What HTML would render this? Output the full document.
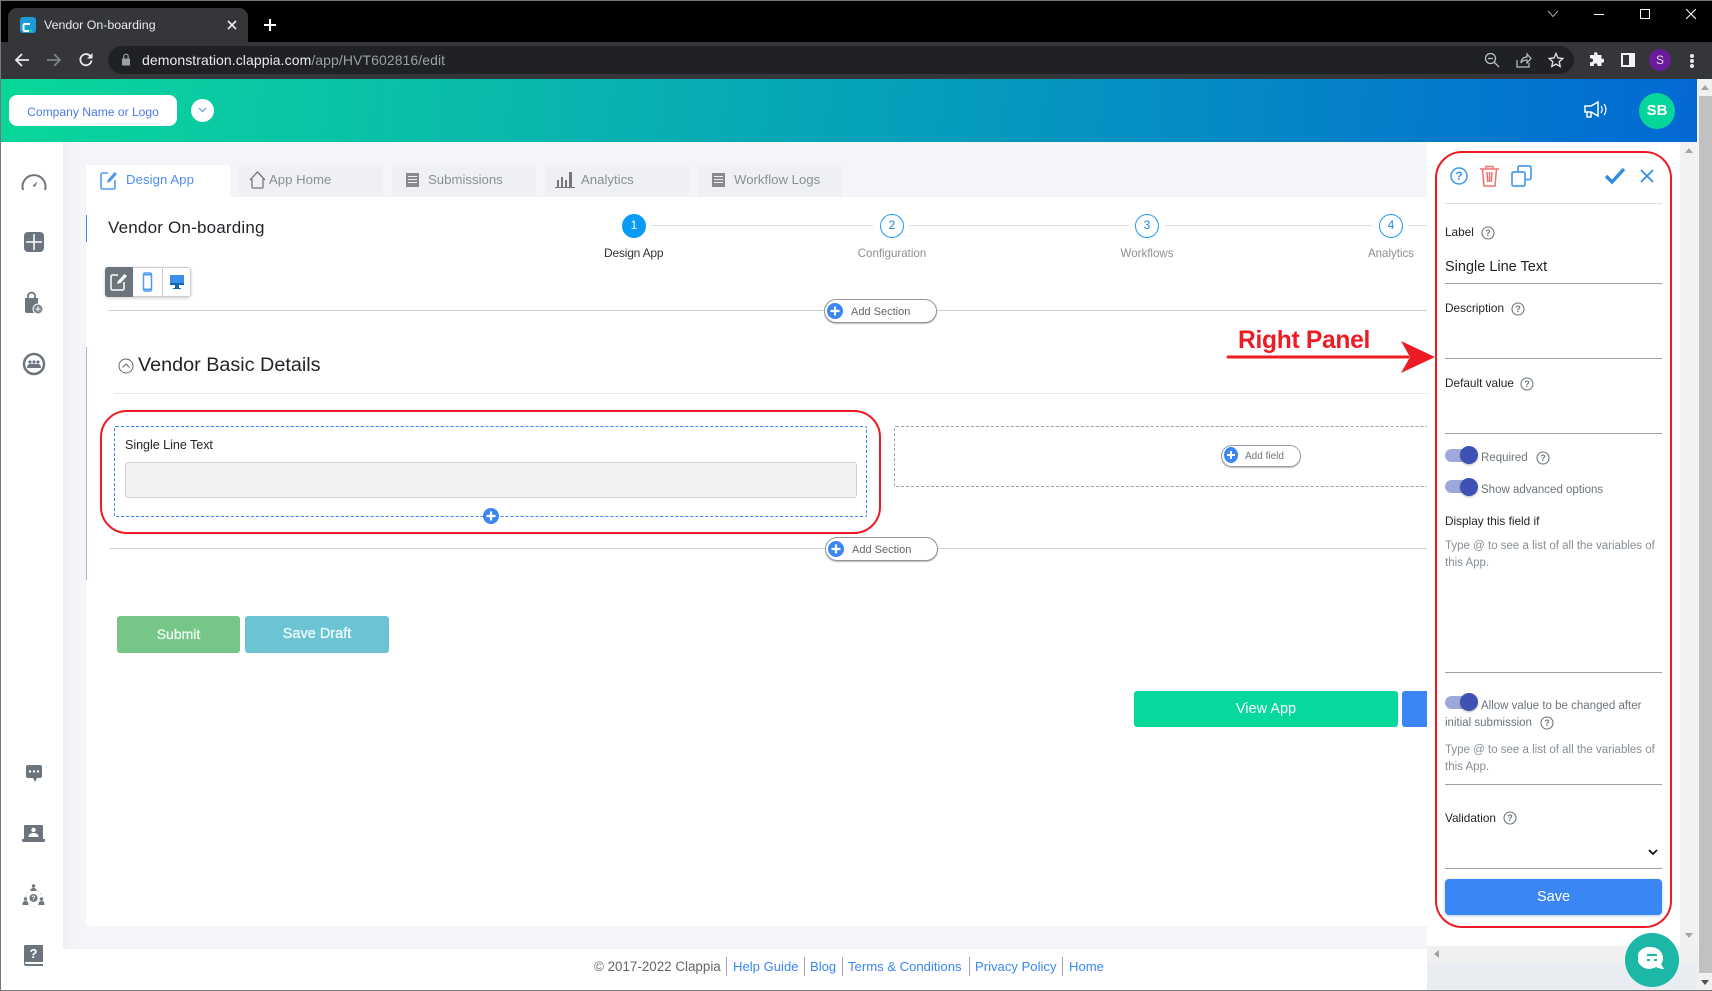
<!DOCTYPE html>
<html lang="en"><head><meta charset="utf-8"><title>Vendor On-boarding</title>
<style>
html,body{margin:0;padding:0;width:1712px;height:991px;overflow:hidden;background:#fff;font-family:"Liberation Sans",sans-serif}
div,span,svg{box-sizing:border-box}
.a,.t,svg{position:absolute}
.t{white-space:nowrap;line-height:20px;font-size:13px}
.l{height:1px;background:#9ea3a8;left:1445px;width:217px;position:absolute}
.lab{color:#212529;font-size:11.8px}
.gr{color:#6c757d;font-size:11.5px}
.ph{color:#868e96;font-size:11.5px}
.pill{position:absolute;background:#fff;border:1px solid #8f969c;border-radius:12px;box-shadow:0 1px 1px #bbb}
.tab{position:absolute;top:165px;height:32px;width:144px;background:#eff0f3}
.tabt{font-size:13.2px;color:#8a8f94;top:170px}
.step{position:absolute;width:24px;height:24px;border:1.5px solid #1e9bf5;border-radius:50%;top:214px;color:#1e87e5;font-size:12px;text-align:center;line-height:21px;background:#fff}
.sl{position:absolute;height:1px;top:225px;background:#dedede}
.sb{font-size:12px;color:#8f8f8f;top:243px;transform:scaleX(.96)}
.lnk{color:#3b86f5;font-size:13.1px;top:957px}
.sep{position:absolute;top:957px;width:1px;height:19px;background:#a59ec0}
.tgt{position:absolute;left:1445px;width:31px;height:13px;border-radius:7px;background:#9fa8da}
.tgk{position:absolute;left:1460px;width:18px;height:18px;border-radius:50%;background:#3f51b5;box-shadow:0 1px 2px rgba(0,0,0,.25)}
</style></head><body>

<!-- browser chrome -->
<div class="a" style="left:0;top:0;width:1712px;height:42px;background:#000"></div>
<div class="a" style="left:8px;top:8px;width:240px;height:34px;background:#35363a;border-radius:9px 9px 0 0"></div>
<div class="a" style="left:0;top:42px;width:1712px;height:37px;background:#35363a"></div>
<div class="a" style="left:20px;top:17px;width:16px;height:16px;border-radius:3px;background:#1e9bd7"></div>
<svg style="left:22px;top:22px" width="10" height="11" viewBox="0 0 10 11"><path d="M8 2H3a1.500 1.500 0 0 0-1.500 1.500v4A1.500 1.500 0 0 0 3 9h5" fill="none" stroke="#fff" stroke-width="2"/><path d="M7 7h3v3H7z" fill="#0ad39b"/></svg>
<div class="t" style="left:44px;top:15px;color:#e8eaed;font-size:12.4px;">Vendor On-boarding</div>
<svg style="left:226px;top:19px" width="12" height="12" viewBox="0 0 12 12"><path d="M2 2l8 8M10 2l-8 8" stroke="#e8eaed" stroke-width="1.6"/></svg>
<svg style="left:263px;top:18px" width="14" height="14" viewBox="0 0 14 14"><path d="M7 1v12M1 7h12" stroke="#fff" stroke-width="2"/></svg>
<svg style="left:14px;top:52px" width="16" height="16" viewBox="0 0 16 16"><path d="M15 8H2M8 2L2 8l6 6" fill="none" stroke="#e8eaed" stroke-width="1.8"/></svg>
<svg style="left:46px;top:52px" width="16" height="16" viewBox="0 0 16 16"><path d="M1 8h13M8 2l6 6-6 6" fill="none" stroke="#7f8286" stroke-width="1.8"/></svg>
<svg style="left:78px;top:52px" width="16" height="16" viewBox="0 0 16 16"><path d="M13.5 8.5A5.6 5.6 0 1 1 12 3.8" fill="none" stroke="#e8eaed" stroke-width="1.8"/><path d="M14.5 1v5.5H9z" fill="#e8eaed"/></svg>
<div class="a" style="left:108px;top:46px;width:1466px;height:28px;background:#202124;border-radius:14px"></div>
<svg style="left:121px;top:53px" width="10" height="13" viewBox="0 0 10 13"><path d="M1 5.5h8v7H1z" fill="#9aa0a6"/><path d="M2.8 5.5V3.4a2.2 2.2 0 0 1 4.4 0v2.1" fill="none" stroke="#9aa0a6" stroke-width="1.2"/></svg>
<div class="t" style="left:142px;top:50px;font-size:14px;color:#e8eaed;letter-spacing:.08px">demonstration.clappia.com<span style="color:#9aa0a6">/app/HVT602816/edit</span></div>
<svg style="left:1484px;top:52px" width="16" height="16" viewBox="0 0 16 16"><circle cx="6.5" cy="6.5" r="5" fill="none" stroke="#bdc1c6" stroke-width="1.3"/><path d="M10.3 10.3L15 15M4 6.5h5" stroke="#bdc1c6" stroke-width="1.3"/></svg>
<svg style="left:1516px;top:52px" width="16" height="16" viewBox="0 0 16 16"><path d="M1 8v7h12v-4M5 11c0-4 3-6 6-6V2l4 4.500-4 4.500V8c-3 0-5 1-6 3z" fill="none" stroke="#bdc1c6" stroke-width="1.2"/></svg>
<svg style="left:1548px;top:52px" width="16" height="16" viewBox="0 0 16 16"><path d="M8 1.500l2 4.500 4.800.5-3.600 3.200 1 4.800L8 12.100 3.800 14.500l1-4.800L1.200 6.500 6 6z" fill="none" stroke="#dadce0" stroke-width="1.400"/></svg>
<svg style="left:1588px;top:52px" width="16" height="16" viewBox="0 0 16 16"><path d="M6 1.500a1.800 1.800 0 0 1 3.500 0V3h4v3.800h1.200a1.900 1.900 0 0 1 0 3.800H13.500V14h-4v-1.200a1.900 1.900 0 0 0-3.700 0V14H2v-3.800h1.200a1.900 1.900 0 0 0 0-3.800H2V3h4z" fill="#f1f3f4"/></svg>
<div class="a" style="left:1621px;top:53px;width:14px;height:14px;background:#f1f3f4"></div>
<div class="a" style="left:1623px;top:55px;width:6px;height:10px;background:#35363a"></div>
<div class="a" style="left:1649px;top:49px;width:22px;height:22px;border-radius:50%;background:#6a1b9a;color:#e8d5ef;font-size:12px;text-align:center;line-height:22px">S</div>
<div class="a" style="left:1690px;top:54px;width:4px;height:4px;border-radius:50%;background:#e8eaed"></div>
<div class="a" style="left:1690px;top:59px;width:4px;height:4px;border-radius:50%;background:#e8eaed"></div>
<div class="a" style="left:1690px;top:64px;width:4px;height:4px;border-radius:50%;background:#e8eaed"></div>
<svg style="left:1547px;top:10px" width="12" height="8" viewBox="0 0 12 8"><path d="M1 1l5 5.500L11 1" fill="none" stroke="#aaa" stroke-width="1"/></svg>
<div class="a" style="left:1594px;top:14px;width:10px;height:1px;background:#fff"></div>
<div class="a" style="left:1640px;top:9px;width:10px;height:10px;border:1px solid #fff"></div>
<svg style="left:1686px;top:9px" width="10" height="10" viewBox="0 0 10 10"><path d="M0 0l10 10M10 0L0 10" stroke="#fff" stroke-width="1"/></svg>

<!-- header -->
<div class="a" style="left:0;top:79px;width:1697px;height:63px;background:linear-gradient(97deg,#09d79a 0%,#09b9ac 30%,#0598bf 60%,#0369d4 100%)"></div>
<div class="a" style="left:9px;top:95px;width:168px;height:31px;background:#fff;border-radius:8px;color:#4a78ee;font-size:12.1px;line-height:34px;text-align:center">Company Name or Logo</div>
<div class="a" style="left:191px;top:99px;width:23px;height:23px;background:#fff;border-radius:50%"></div>
<svg style="left:198px;top:107px" width="9" height="6" viewBox="0 0 9 6"><path d="M1 1l3.500 3.500L8 1" fill="none" stroke="#5b8fe8" stroke-width="1"/></svg>
<svg style="left:1584px;top:101px" width="24" height="18" viewBox="0 0 24 18"><path d="M1 5h6l7-4v14l-7-4H1zM3 11v5h4v-5" fill="none" stroke="#fff" stroke-width="1.500"/><path d="M17 5c1.500 2 1.500 5 0 7M20 3c2.500 3 2.500 8 0 11" fill="none" stroke="#fff" stroke-width="1.200"/></svg>
<div class="a" style="left:1639px;top:93px;width:36px;height:36px;border-radius:50%;background:#07d69b;color:#fff;font-weight:bold;font-size:15px;line-height:36px;text-align:center">SB</div>

<!-- page background -->
<div class="a" style="left:63px;top:142px;width:1364px;height:807px;background:linear-gradient(90deg,#eceef2,#f4f5f9 10px)"></div>
<div class="a" style="left:86px;top:197px;width:1341px;height:729px;background:#fff"></div>
<div class="a" style="left:63px;top:949px;width:1364px;height:41px;background:#fff"></div>

<!-- sidebar icons -->
<svg style="left:20px;top:171px" width="28" height="22" viewBox="0 0 28 22"><path d="M3 19a11.500 11.500 0 1 1 22 0" fill="none" stroke="#6c757d" stroke-width="2"/><path d="M12.500 15l5-5-2.500 6z" fill="#6c757d"/></svg>
<svg style="left:23px;top:231px" width="22" height="22" viewBox="0 0 22 22"><rect x="1" y="1" width="20" height="20" rx="4" fill="#6c757d"/><path d="M11 3v16M3 11h16" stroke="#fff" stroke-width="1.500"/></svg>
<svg style="left:23px;top:291px" width="22" height="24" viewBox="0 0 22 24"><path d="M2 7h13v15H4a2 2 0 0 1-2-2z" fill="#6c757d"/><path d="M5 7V5a3.500 3.500 0 0 1 7 0v2" fill="none" stroke="#6c757d" stroke-width="1.800"/><circle cx="15" cy="18" r="5" fill="#7f878e" stroke="#fff"/><path d="M15 15.500v5M12.500 18h5" stroke="#fff"/></svg>
<svg style="left:22px;top:352px" width="24" height="24" viewBox="0 0 24 24"><circle cx="12" cy="12" r="10" fill="#fff" stroke="#6c757d" stroke-width="2.500"/><g fill="#6c757d"><circle cx="8" cy="10" r="1.600"/><circle cx="12" cy="10" r="1.600"/><circle cx="16" cy="10" r="1.600"/><path d="M5 16c0-3 1.500-4 3-4h8c1.500 0 3 1 3 4z"/></g></svg>
<svg style="left:25px;top:764px" width="18" height="19" viewBox="0 0 18 19"><path d="M3 1h12a2 2 0 0 1 2 2v9a2 2 0 0 1-2 2h-3l-2 4-2-4H3a2 2 0 0 1-2-2V3a2 2 0 0 1 2-2z" fill="#6c757d"/><circle cx="5" cy="7.500" r="1.200" fill="#fff"/><circle cx="9" cy="7.500" r="1.200" fill="#fff"/><circle cx="13" cy="7.500" r="1.200" fill="#fff"/></svg>
<svg style="left:22px;top:824px" width="23" height="19" viewBox="0 0 23 19"><path d="M3 1h17a1 1 0 0 1 1 1v13H2V2a1 1 0 0 1 1-1z" fill="#6c757d"/><path d="M0 15h23v1.500a1.500 1.500 0 0 1-1.500 1.500h-20A1.500 1.500 0 0 1 0 16.500z" fill="#6c757d"/><circle cx="11.500" cy="6" r="2.200" fill="#fff"/><path d="M6.500 13c0-3 2-4 5-4s5 1 5 4z" fill="#fff"/></svg>
<svg style="left:22px;top:884px" width="23" height="23" viewBox="0 0 23 23"><g fill="#6c757d"><circle cx="11.500" cy="2" r="1.700"/><path d="M8.500 7c0-2 1-3 3-3s3 1 3 3z"/><circle cx="3.500" cy="15" r="1.700"/><path d="M.5 21c0-3 1-4 3-4s3 1 3 4z"/><circle cx="19.500" cy="15" r="1.700"/><path d="M16.500 21c0-3 1-4 3-4s3 1 3 4z"/><circle cx="11.500" cy="14" r="4"/></g><text x="11.500" y="16.500" font-size="7" font-weight="bold" fill="#fff" text-anchor="middle" font-family="Liberation Sans">?</text><circle cx="11.500" cy="14" r="8.500" fill="none" stroke="#8f969c" stroke-width=".7" stroke-dasharray="1 3"/></svg>
<svg style="left:23px;top:944px" width="21" height="23" viewBox="0 0 21 23"><path d="M2 1h18v17H3a1 1 0 0 0 0 2h17v2H3a2 2 0 0 1-2-2V2a1 1 0 0 1 1-1z" fill="#6c757d"/><text x="10.500" y="14" font-size="13" font-weight="bold" fill="#fff" text-anchor="middle" font-family="Liberation Sans">?</text></svg>

<!-- tabs -->
<div class="tab" style="left:86px;background:#fff"></div>
<div class="tab" style="left:239px"></div>
<div class="tab" style="left:392px"></div>
<div class="tab" style="left:545px"></div>
<div class="tab" style="left:698px"></div>
<svg style="left:100px;top:170px" width="18" height="20" viewBox="0 0 18 20"><path d="M8 3H2.500A1.500 1.500 0 0 0 1 4.500v13A1.500 1.500 0 0 0 2.500 19h11a1.500 1.500 0 0 0 1.500-1.500V10" fill="none" stroke="#4e9bf0" stroke-width="1.600"/><path d="M7 13l1-3.500L14.500 2 17 4l-6.500 7.500z" fill="#4e9bf0"/></svg>
<div class="t tabt" style="left:126px;color:#4e8df0;letter-spacing:.05px">Design App</div>
<svg style="left:249px;top:171px" width="17" height="18" viewBox="0 0 17 18"><path d="M1 9l7.500-8L16 9M3 8v8a1 1 0 0 0 1 1h9a1 1 0 0 0 1-1V8" fill="none" stroke="#777" stroke-width="1.300"/></svg>
<div class="t tabt" style="left:269px">App Home</div>
<svg style="left:406px;top:173px" width="13" height="14" viewBox="0 0 13 14"><rect width="13" height="14" fill="#8a8a8a"/><path d="M2 3.500h9M2 6.500h9M2 9.500h9" stroke="#eff0f3" stroke-width="1"/></svg>
<div class="t tabt" style="left:428px">Submissions</div>
<svg style="left:555px;top:171px" width="20" height="17" viewBox="0 0 20 17"><path d="M2 9h2v7H2zM6 6h2v10H6zM10 9h2v7h-2zM14 1h3v15h-3zM0 16h20v1H0z" fill="#777"/></svg>
<div class="t tabt" style="left:581px">Analytics</div>
<svg style="left:712px;top:173px" width="13" height="14" viewBox="0 0 13 14"><rect width="13" height="14" fill="#8a8a8a"/><path d="M2 3.500h9M2 6.500h9M2 9.500h9" stroke="#eff0f3" stroke-width="1"/></svg>
<div class="t tabt" style="left:734px">Workflow Logs</div>

<div class="a" style="left:86px;top:215px;width:1px;height:27px;background:#3b86f5"></div>
<div class="a" style="left:86px;top:347px;width:1px;height:233px;background:#a9b7c6"></div>
<div class="a" style="left:1427px;top:161px;width:2px;height:27px;background:#3b86f5"></div>
<div class="t" style="left:108px;top:218px;font-size:17px;color:#212529;letter-spacing:.2px">Vendor On-boarding</div>

<!-- stepper -->
<div class="sl" style="left:651px;width:222px"></div>
<div class="sl" style="left:909px;width:220px"></div>
<div class="sl" style="left:1165px;width:207px"></div>
<div class="sl" style="left:1408px;width:19px"></div>
<div class="step" style="left:622px;background:#0a9bf7;border-color:#0a9bf7;color:#fff">1</div>
<div class="step" style="left:880px">2</div>
<div class="step" style="left:1135px">3</div>
<div class="step" style="left:1379px">4</div>
<div class="t sb" style="left:604px;color:#333;width:59px;text-align:center;transform:none;letter-spacing:-.2px">Design App</div>
<div class="t sb" style="left:852px;width:80px;text-align:center">Configuration</div>
<div class="t sb" style="left:1107px;width:80px;text-align:center">Workflows</div>
<div class="t sb" style="left:1351px;width:80px;text-align:center">Analytics</div>

<!-- view toggle -->
<div class="a" style="left:105px;top:267px;width:86px;height:30px;background:#fff;border:1px solid #ccc;border-radius:3px;box-shadow:0 1px 3px rgba(0,0,0,.2)"></div>
<div class="a" style="left:105px;top:267px;width:28px;height:30px;background:#6c757d;border-radius:3px 0 0 3px"></div>
<div class="a" style="left:162px;top:268px;width:1px;height:28px;background:#ccc"></div>
<svg style="left:110px;top:272px" width="18" height="20" viewBox="0 0 18 20"><path d="M8 3H2.500A1.500 1.500 0 0 0 1 4.500v12A1.500 1.500 0 0 0 2.500 18h10a1.500 1.500 0 0 0 1.500-1.500V10" fill="none" stroke="#fff" stroke-width="1.500"/><path d="M7 12l1-3L14.500 2 17 4l-6.500 7z" fill="#fff"/></svg>
<svg style="left:142px;top:272px" width="11" height="20" viewBox="0 0 11 20"><rect x="1.500" y="1" width="8" height="18" rx="1.500" fill="none" stroke="#4e9bf0" stroke-width="1.500"/><path d="M2 2h7v1.500H2zM2 16.500h7V18H2z" fill="#4e9bf0"/></svg>
<svg style="left:170px;top:275px" width="14" height="15" viewBox="0 0 14 15"><rect width="14" height="10" fill="#3b8eea"/><path d="M0 8h14v2H0zM5 10h4v3h2v1H3v-1h2z" fill="#1667b0"/></svg>

<!-- canvas -->
<div class="a" style="left:108px;top:310px;width:1319px;height:1px;background:#cfcfcf"></div>
<div class="pill" style="left:824px;top:299px;width:113px;height:24px"></div>
<div class="a" style="left:827px;top:303px;width:16px;height:16px;border-radius:50%;background:#3b86f5"></div>
<svg style="left:827px;top:303px" width="16" height="16" viewBox="0 0 16 16"><path d="M8 3.500v9M3.500 8h9" stroke="#fff" stroke-width="2.200"/></svg>
<div class="t" style="left:851px;top:302px;font-size:11px;color:#5f666c">Add Section</div>

<svg style="left:118px;top:358px" width="16" height="16" viewBox="0 0 16 16"><circle cx="8" cy="8" r="7" fill="none" stroke="#666" stroke-width="1"/><path d="M4.500 9.500L8 6l3.500 3.500" fill="none" stroke="#666"/></svg>
<div class="t" style="left:138px;top:355px;font-size:19.8px;color:#212529">Vendor Basic Details</div>
<div class="a" style="left:114px;top:393px;width:1313px;height:1px;background:#e6e6e6"></div>

<div class="a" style="left:114px;top:426px;width:753px;height:91px;border:1px dashed #3b86f5;border-radius:2px"></div>
<div class="t" style="left:125px;top:435px;font-size:12.6px;color:#212529;letter-spacing:-.05px">Single Line Text</div>
<div class="a" style="left:125px;top:462px;width:732px;height:36px;background:#f2f2f2;border:1px solid #ccd0d4;border-radius:3px"></div>
<div class="a" style="left:483px;top:508px;width:16px;height:16px;border-radius:50%;background:#3b86f5"></div>
<svg style="left:483px;top:508px" width="16" height="16" viewBox="0 0 16 16"><path d="M8 3.500v9M3.500 8h9" stroke="#fff" stroke-width="2.200"/></svg>

<div class="a" style="left:894px;top:426px;width:541px;height:61px;border:1px dashed #a0a4a8;border-radius:2px"></div>
<div class="pill" style="left:1221px;top:445px;width:80px;height:22px;border-radius:11px;border-color:#9aa0a6"></div>
<div class="a" style="left:1224px;top:447px;width:14px;height:16px;border-radius:50%;background:#3b86f5"></div>
<svg style="left:1224px;top:447px" width="14" height="16" viewBox="0 0 14 16"><path d="M7 4v8M3 8h8" stroke="#fff" stroke-width="2"/></svg>
<div class="t" style="left:1245px;top:447px;font-size:10px;color:#6c757d">Add field</div>

<div class="a" style="left:110px;top:548px;width:1317px;height:1px;background:#cfcfcf"></div>
<div class="pill" style="left:825px;top:537px;width:113px;height:24px"></div>
<div class="a" style="left:828px;top:541px;width:16px;height:16px;border-radius:50%;background:#3b86f5"></div>
<svg style="left:828px;top:541px" width="16" height="16" viewBox="0 0 16 16"><path d="M8 3.500v9M3.500 8h9" stroke="#fff" stroke-width="2.200"/></svg>
<div class="t" style="left:852px;top:540px;font-size:11px;color:#5f666c">Add Section</div>

<div class="a" style="left:117px;top:616px;width:123px;height:37px;background:#76c687;border-radius:3px;color:#eafbef;font-size:14px;-webkit-text-stroke:.35px #eafbef;text-align:center;line-height:36px">Submit</div>
<div class="a" style="left:245px;top:616px;width:144px;height:37px;background:#6cc3d3;border-radius:3px;color:#eafafc;font-size:14.5px;-webkit-text-stroke:.35px #eafafc;text-align:center;line-height:37px">Save Draft</div>
<div class="a" style="left:1134px;top:691px;width:264px;height:36px;background:#07d89d;border-radius:3px;color:#fff;font-size:14.5px;text-align:center;line-height:36px">View App</div>
<div class="a" style="left:1402px;top:691px;width:25px;height:36px;background:#3b86f5;border-radius:3px 0 0 3px"></div>

<!-- footer -->
<div class="t" style="left:594px;top:957px;font-size:13.4px;color:#666">© 2017-2022 Clappia</div>
<div class="sep" style="left:726px"></div><div class="t lnk" style="left:733px">Help Guide</div>
<div class="sep" style="left:804px"></div><div class="t lnk" style="left:810px">Blog</div>
<div class="sep" style="left:842px"></div><div class="t lnk" style="left:848px">Terms &amp; Conditions</div>
<div class="sep" style="left:969px"></div><div class="t lnk" style="left:975px">Privacy Policy</div>
<div class="sep" style="left:1062px"></div><div class="t lnk" style="left:1069px">Home</div>

<!-- right panel -->
<div class="a" style="left:1427px;top:142px;width:253px;height:804px;background:#fff"></div>
<div class="a" style="left:1680px;top:142px;width:17px;height:804px;background:#f1f1f1"></div>
<div class="a" style="left:1427px;top:946px;width:270px;height:17px;background:#f0f0f0"></div>
<div class="a" style="left:1427px;top:963px;width:270px;height:27px;background:#e9ecf1"></div>
<div class="a" style="left:1697px;top:79px;width:15px;height:911px;background:#f1f1f1"></div>
<div class="a" style="left:1699px;top:96px;width:13px;height:877px;background:#c1c1c1"></div>
<svg style="left:1685px;top:148px" width="8" height="5"><path d="M0 5L4 0l4 5z" fill="#a3a3a3"/></svg>
<svg style="left:1685px;top:933px" width="8" height="5"><path d="M0 0h8L4 5z" fill="#a3a3a3"/></svg>
<svg style="left:1701px;top:85px" width="8" height="5"><path d="M0 5L4 0l4 5z" fill="#a3a3a3"/></svg>
<svg style="left:1701px;top:980px" width="8" height="5"><path d="M0 0h8L4 5z" fill="#505050"/></svg>
<svg style="left:1434px;top:950px" width="5" height="8"><path d="M5 0v8L0 4z" fill="#a3a3a3"/></svg>

<!-- panel icons -->
<svg style="left:1450px;top:167px" width="18" height="18" viewBox="0 0 18 18"><circle cx="9" cy="9" r="8" fill="none" stroke="#3b96f0" stroke-width="1.500"/><text x="9" y="13" font-size="12" font-weight="bold" fill="#3b96f0" text-anchor="middle" font-family="Liberation Sans">?</text></svg>
<svg style="left:1480px;top:165px" width="19" height="22" viewBox="0 0 19 22"><path d="M0 4h19M6 4V1.500h7V4M2.500 4l1.500 17h11l1.500-17M7 7l.7 10M9.500 7v10M12 7l-.7 10" fill="none" stroke="#f07070" stroke-width="1.500"/></svg>
<svg style="left:1511px;top:165px" width="21" height="22" viewBox="0 0 21 22"><rect x="1" y="7" width="13" height="14" rx="1.500" fill="none" stroke="#4e9bf0" stroke-width="1.700"/><path d="M7 7V2.500A1.500 1.500 0 0 1 8.500 1h10A1.500 1.500 0 0 1 20 2.500V13a1.500 1.500 0 0 1-1.500 1.500H14" fill="none" stroke="#4e9bf0" stroke-width="1.700"/></svg>
<svg style="left:1604px;top:167px" width="22" height="18" viewBox="0 0 22 18"><path d="M2 9l6 6L20 2" fill="none" stroke="#2f8de4" stroke-width="3.500"/></svg>
<svg style="left:1640px;top:169px" width="14" height="14" viewBox="0 0 14 14"><path d="M1 1l12 12M13 1L1 13" stroke="#2f8de4" stroke-width="1.800"/></svg>
<div class="a" style="left:1445px;top:203px;width:217px;height:1px;background:#e0e0e0"></div>

<div class="t lab" style="left:1445px;top:222px">Label</div>
<svg style="left:1481px;top:226px" width="14" height="14" viewBox="0 0 14 14"><circle cx="7" cy="7" r="6" fill="none" stroke="#6c757d" stroke-width="1.100"/><text x="7" y="10" font-size="9" font-weight="bold" fill="#6c757d" text-anchor="middle" font-family="Liberation Sans">?</text></svg>
<div class="t" style="left:1445px;top:257px;font-size:14.500px;color:#212529">Single Line Text</div>
<div class="l" style="top:283px"></div>
<div class="t lab" style="left:1445px;top:298px">Description</div>
<svg style="left:1511px;top:302px" width="14" height="14" viewBox="0 0 14 14"><circle cx="7" cy="7" r="6" fill="none" stroke="#6c757d" stroke-width="1.100"/><text x="7" y="10" font-size="9" font-weight="bold" fill="#6c757d" text-anchor="middle" font-family="Liberation Sans">?</text></svg>
<div class="l" style="top:358px"></div>
<div class="t lab" style="left:1445px;top:373px">Default value</div>
<svg style="left:1520px;top:377px" width="14" height="14" viewBox="0 0 14 14"><circle cx="7" cy="7" r="6" fill="none" stroke="#6c757d" stroke-width="1.100"/><text x="7" y="10" font-size="9" font-weight="bold" fill="#6c757d" text-anchor="middle" font-family="Liberation Sans">?</text></svg>
<div class="l" style="top:433px"></div>

<div class="tgt" style="top:449px"></div><div class="tgk" style="top:446px"></div>
<div class="t gr" style="left:1481px;top:448px">Required</div>
<svg style="left:1536px;top:451px" width="14" height="14" viewBox="0 0 14 14"><circle cx="7" cy="7" r="6" fill="none" stroke="#6c757d" stroke-width="1.100"/><text x="7" y="10" font-size="9" font-weight="bold" fill="#6c757d" text-anchor="middle" font-family="Liberation Sans">?</text></svg>
<div class="tgt" style="top:480px"></div><div class="tgk" style="top:478px"></div>
<div class="t gr" style="left:1481px;top:480px">Show advanced options</div>
<div class="t lab" style="left:1445px;top:511px">Display this field if</div>
<div class="t ph" style="left:1445px;top:536px">Type @ to see a list of all the variables of</div>
<div class="t ph" style="left:1445px;top:553px">this App.</div>
<div class="l" style="top:672px"></div>

<div class="tgt" style="top:696px"></div><div class="tgk" style="top:693px"></div>
<div class="t gr" style="left:1481px;top:696px">Allow value to be changed after</div>
<div class="t gr" style="left:1445px;top:713px">initial submission</div>
<svg style="left:1540px;top:716px" width="14" height="14" viewBox="0 0 14 14"><circle cx="7" cy="7" r="6" fill="none" stroke="#6c757d" stroke-width="1.100"/><text x="7" y="10" font-size="9" font-weight="bold" fill="#6c757d" text-anchor="middle" font-family="Liberation Sans">?</text></svg>
<div class="t ph" style="left:1445px;top:740px">Type @ to see a list of all the variables of</div>
<div class="t ph" style="left:1445px;top:757px">this App.</div>
<div class="l" style="top:784px"></div>

<div class="t lab" style="left:1445px;top:808px">Validation</div>
<svg style="left:1503px;top:811px" width="14" height="14" viewBox="0 0 14 14"><circle cx="7" cy="7" r="6" fill="none" stroke="#6c757d" stroke-width="1.100"/><text x="7" y="10" font-size="9" font-weight="bold" fill="#6c757d" text-anchor="middle" font-family="Liberation Sans">?</text></svg>
<svg style="left:1648px;top:849px" width="10" height="7" viewBox="0 0 10 7"><path d="M1 1l4 4 4-4" fill="none" stroke="#111" stroke-width="1.800"/></svg>
<div class="l" style="top:868px"></div>
<div class="a" style="left:1445px;top:879px;width:217px;height:36px;background:#3b86f5;border-radius:4px;color:#fff;font-size:14.500px;text-align:center;line-height:37px;box-shadow:0 1px 3px rgba(59,134,245,.4)">Save</div>

<!-- chat bubble -->
<div class="a" style="left:1625px;top:933px;width:54px;height:54px;border-radius:50%;background:#1cb7a7"></div>
<svg style="left:1638px;top:946px" width="28" height="27" viewBox="0 0 28 27"><path d="M13 1a12 11 0 0 1 12 11c0 3-1 5-2 6l3 5c-3 0-6-1-8-2a12 11 0 1 1-5-20z" fill="#fff"/><path d="M9 9h10M9 14h3M16 14h3" stroke="#1cb7a7" stroke-width="2"/></svg>

<!-- annotation -->
<div class="a" style="left:100px;top:410px;width:781px;height:124px;border:2px solid #ed1c24;border-radius:27px"></div>
<div class="a" style="left:1435px;top:151px;width:237px;height:777px;border:2px solid #ed1c24;border-radius:27px"></div>
<div class="t" style="left:1238px;top:331px;font-size:24.600px;font-weight:bold;color:#ed1c24;letter-spacing:-.3px">Right Panel</div>
<svg style="left:1226px;top:338px" width="212" height="38" viewBox="0 0 212 38"><path d="M2 19h180" stroke="#ed1c24" stroke-width="3" stroke-linecap="round"/><path d="M175 3l34 16-34 16 9-16z" fill="#ed1c24"/></svg>

<!-- window border -->
<div class="a" style="left:0;top:0;width:1px;height:991px;background:#777"></div>
<div class="a" style="left:0;top:0;width:1712px;height:1px;background:#777"></div>
<div class="a" style="left:0;top:990px;width:1712px;height:1px;background:#777"></div>
</body></html>
